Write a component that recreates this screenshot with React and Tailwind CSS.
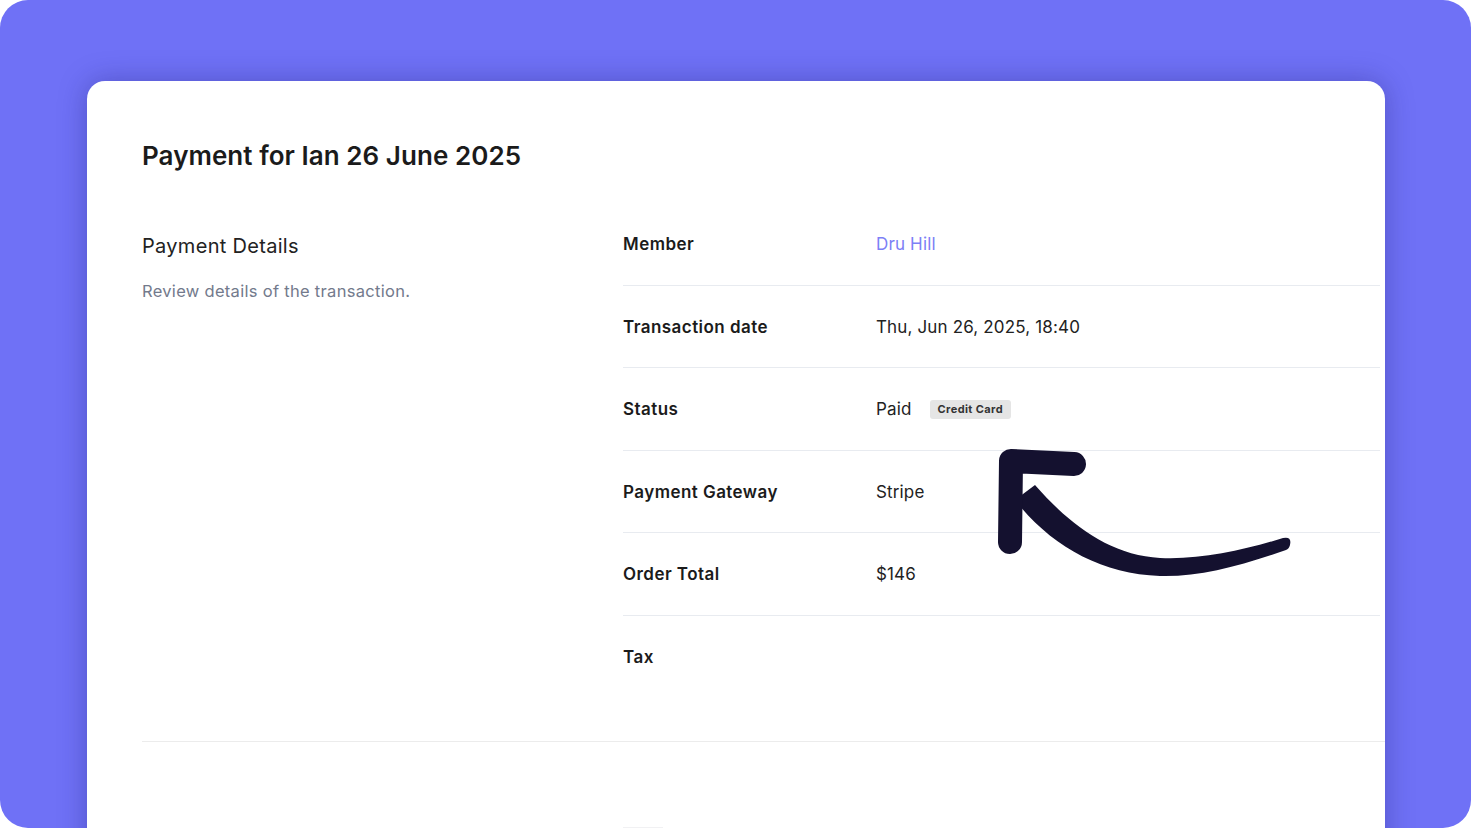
import React from "react";

const rows = [
  { label: "Member", value: <span className="text-[#7c80f6]">Dru Hill</span> },
  { label: "Transaction date", value: "Thu, Jun 26, 2025, 18:40" },
  {
    label: "Status",
    value: (
      <span className="flex items-center gap-[18px]">
        Paid
        <span className="rounded-[3px] bg-[#e5e5e5] px-[8px] py-[2px] text-[11px] font-bold leading-[15px] tracking-[0.4px] text-[#333]">
          Credit Card
        </span>
      </span>
    ),
  },
  { label: "Payment Gateway", value: "Stripe" },
  { label: "Order Total", value: "$146" },
  { label: "Tax", value: "" },
];

function Arrow() {
  // hand-drawn pointer, coords relative to left 990 / top 440 of the card area
  return (
    <svg
      className="pointer-events-none absolute left-[903px] top-[359px]"
      width="320"
      height="150"
      viewBox="990 440 320 150"
      fill="none"
    >
      <path
        d="M1035 485 C1070 525 1110 555 1160 558 C1200 560 1245 550 1283 538 Q1292 536 1290 545 Q1289 549 1286 550 C1240 566 1200 577 1160 576 C1100 574 1050 545 1015 500 Z"
        fill="#14112f"
      />
      <path
        d="M1074 464 L1011 461 L1010 542"
        stroke="#14112f"
        strokeWidth="24"
        strokeLinecap="round"
        strokeLinejoin="round"
      />
    </svg>
  );
}

export default function App() {
  return (
    <div className="h-[828px] w-[1471px] overflow-hidden bg-white font-['Inter',sans-serif]">
      <div className="h-full w-full overflow-hidden rounded-[28px] bg-[#6f71f6] px-[87px] pt-[81px]">
        <div className="relative h-[800px] w-[1298px] rounded-t-[18px] bg-white pl-[55px] pt-[59px] shadow-[0_0_28px_rgba(30,28,110,0.35)]">
          <h1 className="text-[26px] font-semibold leading-[32px] tracking-[0.05px] text-[#1b1b1b]">
            Payment for Ian 26 June 2025
          </h1>

          {/* details section */}
          <div className="mt-[31px] grid grid-cols-[481px_1fr] border-b border-[#ececec] pb-[43px]">
            <div className="pt-[29px]">
              <h2 className="text-[20px] leading-[28px] tracking-[0.3px] text-[#222]">Payment Details</h2>
              <p className="mt-[19px] text-[16.5px] leading-[24px] tracking-[0.3px] text-[#737a8c]">
                Review details of the transaction.
              </p>
            </div>
            <div className="mr-[5px]">
              {rows.map((r, i) => (
                <div
                  key={r.label}
                  className={`grid h-[82.5px] grid-cols-[253px_1fr] items-center pt-[2px] text-[17px] ${
                    i < rows.length - 1 ? "border-b border-[#e8ebf0]" : ""
                  }`}
                >
                  <div className="font-semibold tracking-[0.45px] text-[#1b1b1b]">{r.label}</div>
                  <div className="tracking-[0.15px] text-[#222]">{r.value}</div>
                </div>
              ))}
            </div>
          </div>

          <div className="grid grid-cols-[481px_1fr] pt-[85px]">
            <div />
            <div className="h-[2px] w-[40px] bg-[#f1f1f3]" />
          </div>

          <Arrow />
        </div>
      </div>
    </div>
  );
}
